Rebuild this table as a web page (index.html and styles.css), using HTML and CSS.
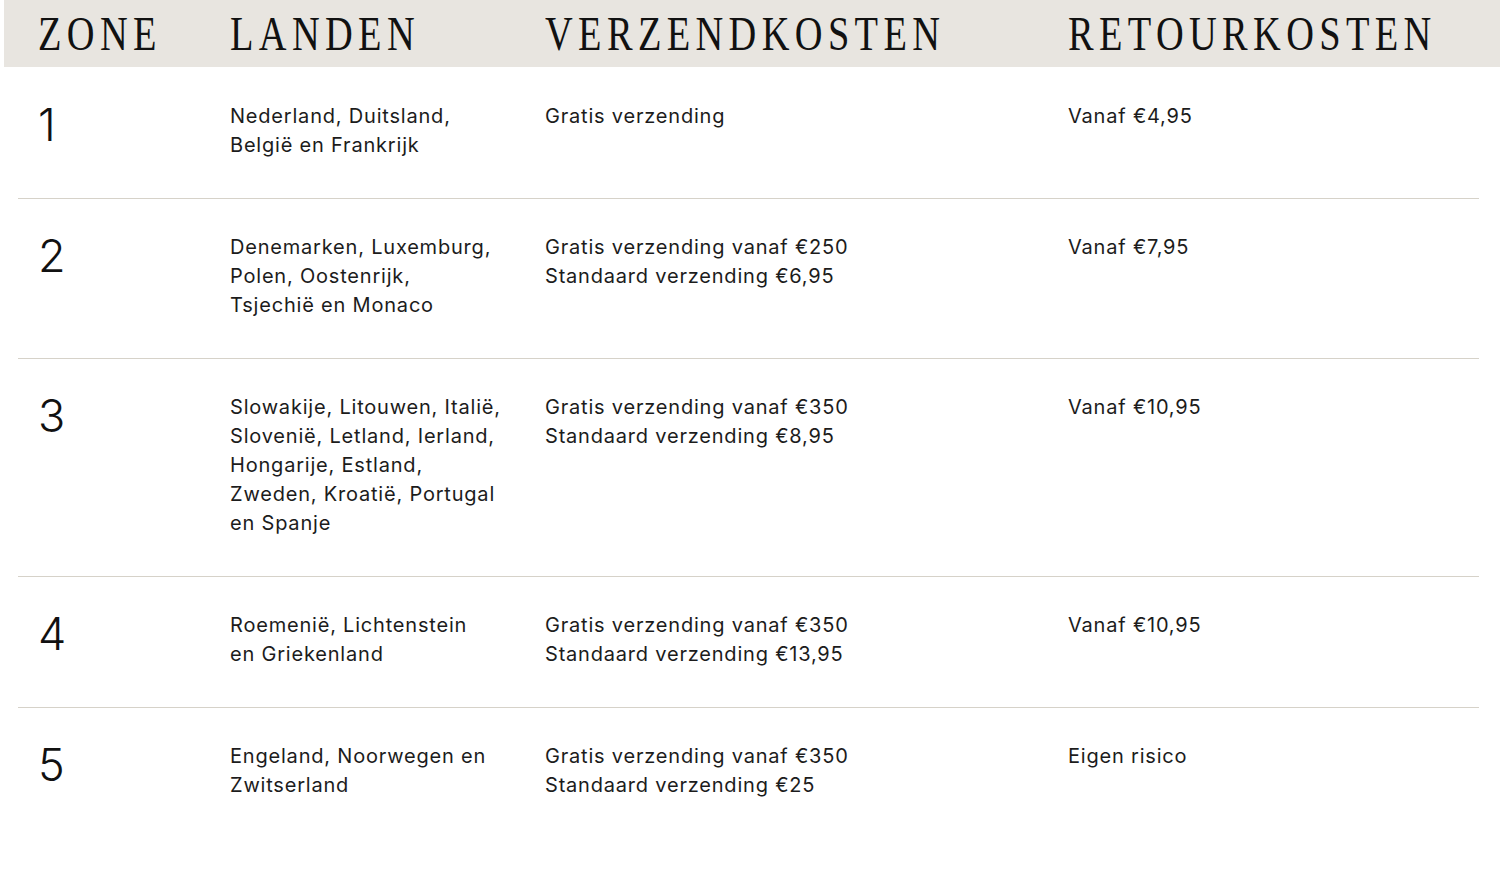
FILE: index.html
```html
<!DOCTYPE html>
<html lang="nl">
<head>
<meta charset="utf-8">
<title>Verzendkosten</title>
<link rel="stylesheet" href="styles.css">
</head>
<body>
<div class="page">
  <div class="head">
    <div class="th"><span class="cap">Zone</span></div>
    <div class="th"><span class="cap">Landen</span></div>
    <div class="th"><span class="cap">Verzendkosten</span></div>
    <div class="th"><span class="cap">Retourkosten</span></div>
  </div>
  <div class="rows">
    <div class="row">
      <div class="zone">1</div>
      <div class="cell">Nederland, Duitsland,<br>België en Frankrijk</div>
      <div class="cell">Gratis verzending</div>
      <div class="cell">Vanaf €4,95</div>
    </div>
    <div class="row">
      <div class="zone">2</div>
      <div class="cell">Denemarken, Luxemburg,<br>Polen, Oostenrijk,<br>Tsjechië en Monaco</div>
      <div class="cell">Gratis verzending vanaf €250<br>Standaard verzending €6,95</div>
      <div class="cell">Vanaf €7,95</div>
    </div>
    <div class="row">
      <div class="zone">3</div>
      <div class="cell">Slowakije, Litouwen, Italië,<br>Slovenië, Letland, Ierland,<br>Hongarije, Estland,<br>Zweden, Kroatië, Portugal<br>en Spanje</div>
      <div class="cell">Gratis verzending vanaf €350<br>Standaard verzending €8,95</div>
      <div class="cell">Vanaf €10,95</div>
    </div>
    <div class="row">
      <div class="zone">4</div>
      <div class="cell">Roemenië, Lichtenstein<br>en Griekenland</div>
      <div class="cell">Gratis verzending vanaf €350<br>Standaard verzending €13,95</div>
      <div class="cell">Vanaf €10,95</div>
    </div>
    <div class="row last">
      <div class="zone">5</div>
      <div class="cell">Engeland, Noorwegen en<br>Zwitserland</div>
      <div class="cell">Gratis verzending vanaf €350<br>Standaard verzending €25</div>
      <div class="cell">Eigen risico</div>
    </div>
  </div>
</div>
</body>
</html>
```

FILE: styles.css
```css
html, body {
  margin: 0;
  padding: 0;
  background: #ffffff;
}

body {
  color: #1a1a1a;
  font-family: "Inter", "Liberation Sans", sans-serif;
}

.page {
  margin-left: 4px;
  width: 1496px;
}

.head {
  display: grid;
  grid-template-columns: 192px 315px 523px 1fr;
  height: 67px;
  padding-left: 34px;
  background: #e8e5e0;
  box-sizing: border-box;
  align-items: center;
}

.th {
  overflow: visible;
  white-space: nowrap;
}

.cap {
  display: inline-block;
  font-family: "Liberation Serif", serif;
  font-size: 48px;
  line-height: 48px;
  letter-spacing: 6.7px;
  text-transform: uppercase;
  color: #111;
  transform: scaleX(0.8);
  transform-origin: left center;
  margin-top: 1px;
}

.rows {
  margin: 0 21px 0 14px;
  padding-top: 1px;
}

.row {
  display: grid;
  grid-template-columns: 192px 315px 523px 1fr;
  padding: 34px 0 38px 20px;
  border-bottom: 1px solid #d6d2c9;
}

.row.last {
  border-bottom: none;
}

.zone {
  font-size: 45px;
  font-weight: 300;
  line-height: 40px;
  padding-top: 3px;
  color: #111;
}

.cell {
  font-size: 20px;
  line-height: 29px;
  letter-spacing: 0.8px;
  color: #1c1c1c;
}
```
